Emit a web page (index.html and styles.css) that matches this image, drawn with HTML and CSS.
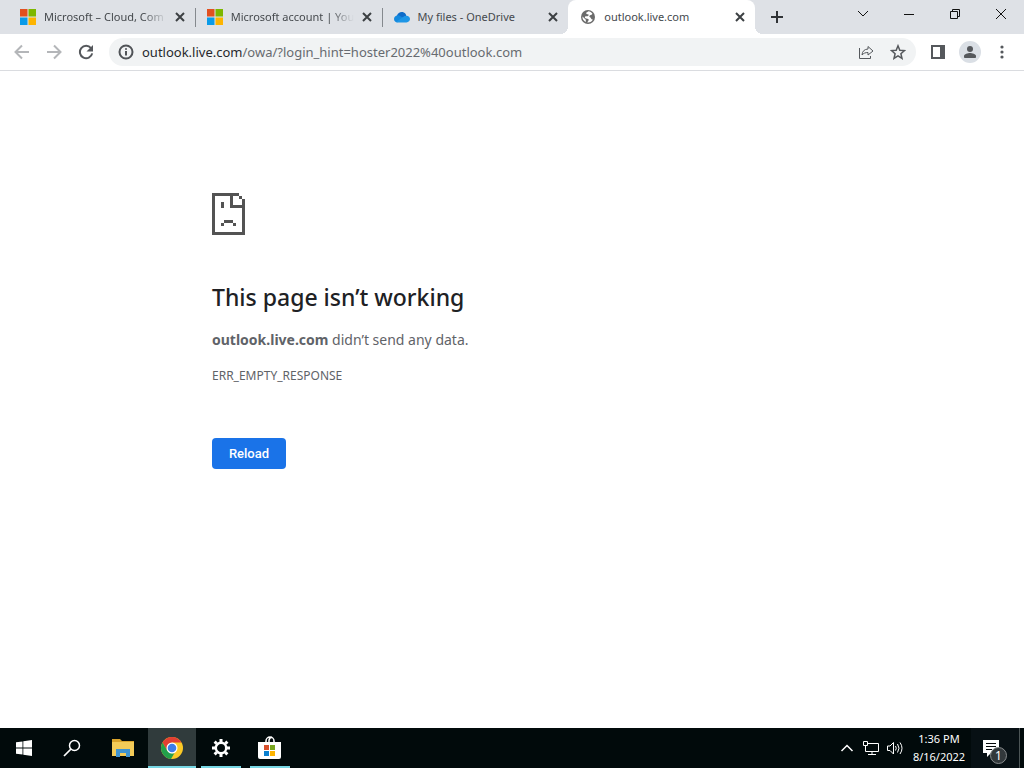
FILE: index.html
```html
<!DOCTYPE html>
<html lang="en">
<head>
    <meta charset="UTF-8">
    <meta name="viewport" content="width=device-width, initial-scale=1.0">
    <title>outlook.live.com</title>
    <link rel="stylesheet" href="styles.css">
</head>
<body>
    <header class="tab-strip">
        <div class="tabs">
            <div class="tab">
                <svg class="favicon" viewBox="0 0 16 16"><path fill="#e2501f" d="M0 0h7.5v7.5H0z"/><path fill="#7db700" d="M8.5 0H16v7.5H8.5z"/><path fill="#0a9be8" d="M0 8.5h7.5V16H0z"/><path fill="#fdb400" d="M8.5 8.5H16V16H8.5z"/></svg>
                <span class="tab-title faded">Microsoft – Cloud, Com</span>
                <button class="tab-close" aria-label="Close tab"><svg viewBox="0 0 10 10"><path d="M1 1l8 8M9 1l-8 8"/></svg></button>
            </div>
            <div class="tab">
                <svg class="favicon" viewBox="0 0 16 16"><path fill="#e2501f" d="M0 0h7.5v7.5H0z"/><path fill="#7db700" d="M8.5 0H16v7.5H8.5z"/><path fill="#0a9be8" d="M0 8.5h7.5V16H0z"/><path fill="#fdb400" d="M8.5 8.5H16V16H8.5z"/></svg>
                <span class="tab-title faded">Microsoft account | You</span>
                <button class="tab-close" aria-label="Close tab"><svg viewBox="0 0 10 10"><path d="M1 1l8 8M9 1l-8 8"/></svg></button>
            </div>
            <div class="tab">
                <svg class="favicon" viewBox="0 0 16 16"><path fill="#0f6cc9" d="M3 6.500C4 3.600 7.200 2.300 9.800 3.600c1.400.7 2.200 1.800 2.500 3.100L7 10 2 8z"/><path fill="#1489de" d="M3 6.400C1.200 6.600 0 8.100 0 9.900 0 12 1.600 13.300 3.600 13.300L9.500 9 6 6.900C5 6.400 4 6.300 3 6.400z"/><path fill="#1e96e6" d="M2 13c.5.3 1 .4 1.600.4h8.900c2 0 3.500-1.400 3.500-3.300 0-1.900-1.600-3.500-3.700-3.400-.9 0-1.700.3-2.500.9z"/></svg>
                <span class="tab-title">My files - OneDrive</span>
                <button class="tab-close" aria-label="Close tab"><svg viewBox="0 0 10 10"><path d="M1 1l8 8M9 1l-8 8"/></svg></button>
            </div>
            <div class="tab active">
                <svg class="favicon" viewBox="0 0 16 16"><circle cx="8" cy="8" r="7" fill="#6b6b6b"/><path fill="#fff" d="M8.500 2.300c-.9.900-2.300.8-2.300 2 0 .9 1 1 1.800 1 .9 0 .8 1.400.1 1.700-1 .4-2.600-.2-3.200.9-.4.900.5 1.400 1.300 1.500 1.500.2 2.800.4 2.500 1.700-.2.900-1.100 1.300-1.400 2.400 2.600.3 4.600-1 5.600-3-.8 0-1.700-.3-1.800-1.100-.2-1-1-.9-1.500-1.500-.7-.9.200-1.900 1.200-2 .9-.1 1.600-.6 1.500-1.400-.8-1.200-2.300-2-3.800-2.200z"/><path fill="#fff" d="M2.500 7.500l3.300 3.300v2.100C3.600 12 2.200 9.900 2.500 7.500z"/></svg>
                <span class="tab-title">outlook.live.com</span>
                <button class="tab-close" aria-label="Close tab"><svg viewBox="0 0 10 10"><path d="M1 1l8 8M9 1l-8 8"/></svg></button>
            </div>
        </div>
        <button class="new-tab" aria-label="New tab"><svg viewBox="0 0 12 12"><path d="M6 0v12M0 6h12"/></svg></button>
        <div class="window-controls">
            <button aria-label="Search tabs"><svg viewBox="0 0 12 12"><path d="M1 3l5 5 5-5"/></svg></button>
            <button aria-label="Minimize"><svg viewBox="0 0 12 12"><path d="M1 6.500h10"/></svg></button>
            <button aria-label="Restore"><svg viewBox="0 0 12 12"><path d="M1.500 3.500h7v7h-7zM3.500 3.500v-2h7v7h-2"/></svg></button>
            <button aria-label="Close"><svg viewBox="0 0 12 12"><path d="M1 1l10 10M11 1L1 11"/></svg></button>
        </div>
    </header>

    <nav class="toolbar">
        <button class="tool muted" aria-label="Back"><svg viewBox="0 0 16 16"><path d="M15 8H2M8 1.500L1.500 8 8 14.500"/></svg></button>
        <button class="tool muted" aria-label="Forward"><svg viewBox="0 0 16 16"><path d="M1 8h13M8 1.500L14.500 8 8 14.500"/></svg></button>
        <button class="tool" aria-label="Reload page"><svg viewBox="0 0 16 16"><path d="M13 4.200A6.200 6.200 0 1 0 14.200 9.400"/><path class="solid" d="M15 1v6.500H8.500z"/></svg></button>
        <div class="omnibox">
            <svg class="info" viewBox="0 0 16 16"><circle cx="8" cy="8" r="6.500"/><path d="M8 7v4.500M8 4.200v1.600"/></svg>
            <a class="url" href="#"><span class="host">outlook.live.com</span>/owa/?login_hint=hoster2022%40outlook.com</a>
            <button class="tool" aria-label="Share"><svg viewBox="0 0 16 16"><path class="thin" d="M1.500 4v10.500h11V12M4 11c.2-3.800 2.500-5.800 6-6V2.500L15 7l-5 4V8.500C7.500 8.500 5.500 9.200 4 11z"/></svg></button>
            <button class="tool" aria-label="Bookmark this page"><svg viewBox="0 0 16 16"><path class="star" d="M8 1.800l1.800 4.400 4.700.4-3.600 3.100 1.100 4.600L8 11.800l-4 2.500 1.100-4.600-3.600-3.100 4.700-.4z"/></svg></button>
        </div>
        <button class="tool" aria-label="Side panel"><svg viewBox="0 0 16 16"><path d="M2 2h12v12H2z"/><path class="solid" d="M10 2h4v12h-4z"/></svg></button>
        <button class="tool profile" aria-label="Profile"><svg viewBox="0 0 16 16"><circle class="solid" cx="8" cy="5" r="3"/><path class="solid" d="M2 14v-2c0-2 4-3 6-3s6 1 6 3v2z"/></svg></button>
        <button class="tool" aria-label="Menu"><svg viewBox="0 0 16 16"><circle class="solid" cx="8" cy="3" r="1.600"/><circle class="solid" cx="8" cy="8" r="1.600"/><circle class="solid" cx="8" cy="13" r="1.600"/></svg></button>
    </nav>

    <main class="page">
        <div class="error">
            <svg class="error-icon" viewBox="0 0 11 14" shape-rendering="crispEdges"><path d="M0 0h9v1H7v3h3V2h1v12H0zM1 1v12h9V5H6V1zM9 1h1v1H9zM3 3h1v2H3zM4 9h3v1H4zM3 10h1v1H3zM7 10h1v1H7z" fill-rule="evenodd"/></svg>
            <h1>This page isn’t working</h1>
            <p class="message"><strong>outlook.live.com</strong> didn’t send any data.</p>
            <p class="code">ERR_EMPTY_RESPONSE</p>
            <button class="reload">Reload</button>
        </div>
    </main>

    <footer class="taskbar">
        <button class="task" aria-label="Start"><svg width="16" height="16" viewBox="0 0 16 16" fill="#fff"><path d="M0 2.300L6.500 1.400v6.200H0zM7.300 1.300L16 0v7.600H7.300zM0 8.400h6.500v6.200L0 13.700zM7.300 8.400H16V16l-8.700-1.300z"/></svg></button>
        <button class="task" aria-label="Search"><svg width="18" height="18" viewBox="0 0 18 18" fill="none" stroke="#fff"><circle cx="11.500" cy="6.500" r="5" stroke-width="1.500"/><path d="M8 10l-7 7" stroke-width="1.700"/></svg></button>
        <div class="apps">
            <button class="task" aria-label="File Explorer"><svg width="22" height="18" viewBox="0 0 22 18"><path fill="#d9a32b" d="M0 0h8l2 2h12v4H0z"/><path fill="#f3cb58" d="M0 3h22v14H0z"/><path fill="#3f93d0" d="M4 10h14v8h-4v-4H8v4H4z"/><path fill="#f3cb58" d="M8 14h6v3H8z"/></svg></button>
            <button class="task open current" aria-label="Google Chrome"><svg width="24" height="24" viewBox="0 0 24 24"><circle cx="12" cy="12" r="11" fill="#fbc926"/><path fill="#e23f33" d="M2.500 6.500a11 11 0 0 1 19 0H12L7 14.500z"/><path fill="#22a04b" d="M2.500 6.500L7.500 15l4.500 2.500 2.500-.5-3.500 6A11 11 0 0 1 2.500 6.500z"/><circle cx="12" cy="12" r="5.500" fill="#fff"/><circle cx="12" cy="12" r="4.300" fill="#3e7de8"/></svg></button>
            <button class="task open" aria-label="Settings"><svg width="18" height="18" viewBox="0 0 18 18" fill="none" stroke="#fff"><circle cx="9" cy="9" r="5.200" stroke-width="2.400"/><g stroke-width="3"><path d="M9 0v3M9 15v3M0 9h3M15 9h3M2.600 2.600l2.200 2.200M13.200 13.200l2.200 2.200M15.400 2.600l-2.200 2.200M4.800 13.200l-2.200 2.200"/></g></svg></button>
            <button class="task open" aria-label="Microsoft Store"><svg width="24" height="24" viewBox="0 0 24 24"><path fill="none" stroke="#fff" stroke-width="1.500" d="M8 7V5a4 4 0 0 1 8 0v2M11 6V4.500a3.500 3.500 0 0 1 3-3.200"/><path fill="#fff" d="M0 6h23v15q0 2-2 2H2q-2 0-2-2z"/><path fill="#d8502c" d="M6 9h5v5H6z"/><path fill="#78a51e" d="M12 9h5v5h-5z"/><path fill="#0a80d0" d="M6 15h5v5H6z"/><path fill="#fdb400" d="M12 15h5v5h-5z"/></svg></button>
        </div>
        <div class="tray">
            <button class="tray-icon" aria-label="Show hidden icons"><svg width="14" height="10" viewBox="0 0 14 10"><path stroke-width="1.500" d="M1.500 8L7 2.500 12.500 8"/></svg></button>
            <button class="tray-icon" aria-label="Network"><svg width="18" height="16" viewBox="0 0 18 16"><path d="M6 3.500h10.500v8H3.500V6M10 11.500v3M6 14.500h8M1.500 1.500h4v4h-4z"/></svg></button>
            <button class="tray-icon" aria-label="Volume"><svg width="18" height="16" viewBox="0 0 18 16"><path d="M1.500 6v4.500H4L7.500 14V2.500L4 6zM9.500 6q1.500 2.200 0 4.500M11.500 4q3 4.200 0 8.500M14 2.500q4 5.700 0 11.500"/></svg></button>
            <time class="clock" datetime="2022-08-16T13:36"><span>1:36 PM</span><span>8/16/2022</span></time>
            <button class="notifications" aria-label="Notifications">
                <svg width="16" height="17" viewBox="0 0 16 17"><path fill="#fff" d="M0 0h16v13H8l-4 4v-4H0z"/><path stroke="#05090b" d="M3 3.500h10M3 6.500h10M3 9.500h6"/></svg>
                <span class="badge">1</span>
            </button>
        </div>
    </footer>
</body>
</html>
```

FILE: styles.css
```css
* {
    box-sizing: border-box;
}
body {
    margin: 0;
    min-height: 100vh;
    display: flex;
    flex-direction: column;
    font-family: "Noto Sans", "Open Sans", sans-serif;
    background: #fff;
}
button {
    display: flex;
    align-items: center;
    justify-content: center;
    flex: none;
    padding: 0;
    border: 0;
    background: none;
    font-family: inherit;
}
svg {
    flex: none;
    display: block;
}

/* Tabs */
.tab-strip {
    display: flex;
    height: 34px;
    padding-left: 8px;
    background: #dee1e6;
}
.tabs {
    display: flex;
    flex: 0 1 747px;
    min-width: 0;
}
.tab {
    position: relative;
    display: flex;
    align-items: center;
    flex: 1;
    min-width: 0;
    padding: 0 7px 0 12px;
    color: #45494d;
    font-size: 11px;
}
.tab:nth-child(2)::before,
.tab:nth-child(3)::before {
    content: "";
    position: absolute;
    left: 0;
    top: 8px;
    width: 1px;
    height: 19px;
    background: #85898e;
}
.tab.active {
    background: #fff;
    border-radius: 8px 8px 0 0;
}
.tab.active::before,
.tab.active::after {
    content: "";
    position: absolute;
    bottom: 0;
    width: 8px;
    height: 8px;
}
.tab.active::before {
    left: -8px;
    background: radial-gradient(circle at 0 0, transparent 8px, #fff 8px);
}
.tab.active::after {
    right: -8px;
    background: radial-gradient(circle at 100% 0, transparent 8px, #fff 8px);
}
.favicon {
    width: 16px;
    height: 16px;
    margin-right: 8px;
}
.tab-title {
    flex: 1;
    min-width: 0;
    white-space: nowrap;
    line-height: 20px;
}
.tab-title.faded {
    mask-image: linear-gradient(to right, #000 calc(100% - 24px), transparent);
}
.tab-close {
    width: 16px;
    height: 16px;
    margin-left: 5px;
}
.tab-close svg {
    width: 10px;
    height: 10px;
    stroke: #3c4043;
    stroke-width: 2;
}
.new-tab {
    width: 44px;
}
.new-tab svg {
    width: 12px;
    height: 12px;
    stroke: #303336;
    stroke-width: 2;
}
.window-controls {
    display: flex;
    margin-left: auto;
    height: 28px;
}
.window-controls button {
    width: 46px;
}
.window-controls svg {
    width: 12px;
    height: 12px;
    fill: none;
    stroke: #111;
}

/* Toolbar */
.toolbar {
    display: flex;
    align-items: center;
    height: 37px;
    padding: 0 6px;
    border-bottom: 1px solid #dadce0;
}
.tool {
    width: 32px;
    height: 28px;
}
.tool svg {
    width: 16px;
    height: 16px;
    fill: none;
    stroke: #55585c;
    stroke-width: 2;
}
.tool .solid {
    fill: #55585c;
    stroke: none;
}
.tool .thin {
    stroke-width: 1;
}
.tool .star {
    stroke-width: 1.5;
}
.tool.muted svg {
    stroke: #b4b6b9;
}
.omnibox {
    display: flex;
    align-items: center;
    flex: 1;
    min-width: 0;
    height: 28px;
    margin: 0 6px 0 7px;
    padding: 0 2px 0 9px;
    border-radius: 14px;
    background: #f1f3f4;
}
.omnibox .info {
    width: 16px;
    height: 16px;
    margin-right: 8px;
    fill: none;
    stroke: #505357;
    stroke-width: 2;
}
.url {
    flex: 1;
    overflow: hidden;
    white-space: nowrap;
    color: #676b70;
    font-size: 13px;
    line-height: 20px;
    text-decoration: none;
}
.host {
    color: #25282c;
}
.tool.profile svg {
    width: 22px;
    height: 22px;
    padding: 3px;
    border-radius: 50%;
    background: #dadfe5;
}

/* Error page */
.page {
    flex: 1;
}
.error {
    max-width: 600px;
    margin: 0 auto;
    padding-top: 122px;
    color: #5f6368;
}
.error-icon {
    width: 33px;
    height: 42px;
    fill: #535353;
}
.error h1 {
    margin: 47px 0 16px;
    color: #202124;
    font-size: 23px;
    font-weight: 500;
    line-height: 30px;
}
.error p {
    margin: 0;
}
.message {
    font-size: 14px;
    line-height: 24px;
}
.error .code {
    margin-top: 12px;
    font-size: 12px;
    line-height: 24px;
}
.reload {
    min-width: 74px;
    height: 31px;
    margin-top: 50px;
    padding: 0 16px;
    border-radius: 4px;
    background: #1a73e8;
    color: #fff;
    font-family: Roboto, sans-serif;
    font-size: 13px;
    font-weight: 500;
}

/* Taskbar */
.taskbar {
    display: flex;
    height: 40px;
    background: #010a0b;
    color: #fff;
}
.task {
    width: 48px;
    height: 40px;
}
.apps {
    display: flex;
    gap: 1px;
    margin-left: 3px;
}
.open {
    background: linear-gradient(#76d6e3, #76d6e3) center bottom / 40px 2px no-repeat;
}
.current {
    background-color: #303b3c;
    background-size: 100% 2px;
}
.tray {
    display: flex;
    align-items: center;
    margin-left: auto;
}
.tray-icon {
    width: 24px;
    height: 40px;
}
.tray-icon svg {
    fill: none;
    stroke: #fff;
}
.clock {
    display: flex;
    flex-direction: column;
    width: 64px;
    text-align: center;
    font-size: 11px;
    line-height: 18px;
}
.notifications {
    position: relative;
    width: 49px;
    height: 40px;
    margin-right: 4px;
    padding-right: 8px;
    border-right: 1px solid #4c5556;
    background: #071014;
}
.badge {
    position: absolute;
    right: 12px;
    bottom: 4px;
    width: 17px;
    height: 17px;
    border: 1px solid #878b8d;
    border-radius: 50%;
    background: #32383b;
    color: #fff;
    font-size: 12px;
    line-height: 15px;
    text-align: center;
}
```
